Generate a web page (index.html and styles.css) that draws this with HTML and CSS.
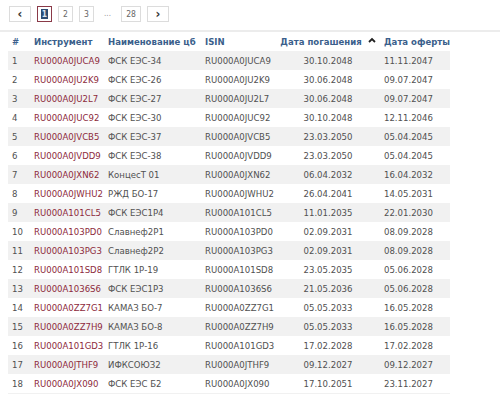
FILE: index.html
```html
<!DOCTYPE html>
<html lang="ru">
<head>
    <meta charset="UTF-8">
    <title>Облигации</title>
    <link rel="stylesheet" href="styles.css">
</head>
<body>
    <div class="pager">
        <span class="page-btn arrow">&#8249;</span>
        <span class="page-btn active"><span class="sel">1</span></span>
        <span class="page-btn">2</span>
        <span class="page-btn">3</span>
        <span class="page-gap">...</span>
        <span class="page-btn wide">28</span>
        <span class="page-btn arrow">&#8250;</span>
    </div>

    <div class="table-wrap">
        <table class="bonds">
            <thead>
                <tr>
                    <th class="col-num">#</th>
                    <th class="col-code">Инструмент</th>
                    <th class="col-name">Наименование цб</th>
                    <th class="col-isin">ISIN</th>
                    <th class="col-date">Дата погашения
                        <svg class="sort-icon" viewBox="0 0 8 6"><polyline points="1,5 4,2 7,5"></polyline></svg>
                    </th>
                    <th class="col-offer">Дата оферты</th>
                </tr>
            </thead>
            <tbody>
                <tr><td>1</td><td class="code">RU000A0JUCA9</td><td>ФСК ЕЭС-34</td><td>RU000A0JUCA9</td><td class="date">30.10.2048</td><td>11.11.2047</td></tr>
                <tr><td>2</td><td class="code">RU000A0JU2K9</td><td>ФСК ЕЭС-26</td><td>RU000A0JU2K9</td><td class="date">30.06.2048</td><td>09.07.2047</td></tr>
                <tr><td>3</td><td class="code">RU000A0JU2L7</td><td>ФСК ЕЭС-27</td><td>RU000A0JU2L7</td><td class="date">30.06.2048</td><td>09.07.2047</td></tr>
                <tr><td>4</td><td class="code">RU000A0JUC92</td><td>ФСК ЕЭС-30</td><td>RU000A0JUC92</td><td class="date">30.10.2048</td><td>12.11.2046</td></tr>
                <tr><td>5</td><td class="code">RU000A0JVCB5</td><td>ФСК ЕЭС-37</td><td>RU000A0JVCB5</td><td class="date">23.03.2050</td><td>05.04.2045</td></tr>
                <tr><td>6</td><td class="code">RU000A0JVDD9</td><td>ФСК ЕЭС-38</td><td>RU000A0JVDD9</td><td class="date">23.03.2050</td><td>05.04.2045</td></tr>
                <tr><td>7</td><td class="code">RU000A0JXN62</td><td>КонцесТ 01</td><td>RU000A0JXN62</td><td class="date">06.04.2032</td><td>16.04.2032</td></tr>
                <tr><td>8</td><td class="code">RU000A0JWHU2</td><td>РЖД БО-17</td><td>RU000A0JWHU2</td><td class="date">26.04.2041</td><td>14.05.2031</td></tr>
                <tr><td>9</td><td class="code">RU000A101CL5</td><td>ФСК ЕЭС1Р4</td><td>RU000A101CL5</td><td class="date">11.01.2035</td><td>22.01.2030</td></tr>
                <tr><td>10</td><td class="code">RU000A103PD0</td><td>Славнеф2Р1</td><td>RU000A103PD0</td><td class="date">02.09.2031</td><td>08.09.2028</td></tr>
                <tr><td>11</td><td class="code">RU000A103PG3</td><td>Славнеф2Р2</td><td>RU000A103PG3</td><td class="date">02.09.2031</td><td>08.09.2028</td></tr>
                <tr><td>12</td><td class="code">RU000A101SD8</td><td>ГТЛК 1Р-19</td><td>RU000A101SD8</td><td class="date">23.05.2035</td><td>05.06.2028</td></tr>
                <tr><td>13</td><td class="code">RU000A1036S6</td><td>ФСК ЕЭС1Р3</td><td>RU000A1036S6</td><td class="date">21.05.2036</td><td>05.06.2028</td></tr>
                <tr><td>14</td><td class="code">RU000A0ZZ7G1</td><td>КАМАЗ БО-7</td><td>RU000A0ZZ7G1</td><td class="date">05.05.2033</td><td>16.05.2028</td></tr>
                <tr><td>15</td><td class="code">RU000A0ZZ7H9</td><td>КАМАЗ БО-8</td><td>RU000A0ZZ7H9</td><td class="date">05.05.2033</td><td>16.05.2028</td></tr>
                <tr><td>16</td><td class="code">RU000A101GD3</td><td>ГТЛК 1Р-16</td><td>RU000A101GD3</td><td class="date">17.02.2028</td><td>17.02.2028</td></tr>
                <tr><td>17</td><td class="code">RU000A0JTHF9</td><td>ИФКСОЮЗ2</td><td>RU000A0JTHF9</td><td class="date">09.12.2027</td><td>09.12.2027</td></tr>
                <tr><td>18</td><td class="code">RU000A0JX090</td><td>ФСК ЕЭС Б2</td><td>RU000A0JX090</td><td class="date">17.10.2051</td><td>23.11.2027</td></tr>
                <tr class="next-row"><td colspan="6"></td></tr>
            </tbody>
        </table>
    </div>
</body>
</html>
```

FILE: styles.css
```css
* {
    margin: 0;
    padding: 0;
    box-sizing: border-box;
}

body {
    font-family: "DejaVu Sans Condensed", "DejaVu Sans", sans-serif;
    font-stretch: condensed;
    font-size: 9.5px;
    color: #505050;
    background: #fff;
    overflow: hidden;
}

/* pagination */
.pager {
    display: flex;
    align-items: center;
    gap: 6px;
    height: 30px;
    padding: 0 0 3px 9px;
}

.page-btn {
    display: flex;
    align-items: center;
    justify-content: center;
    width: 15px;
    height: 16px;
    border: 1px solid #dcdcdc;
    color: #666;
    font-size: 8.5px;
}

.page-btn.arrow {
    width: 22px;
    font-size: 13px;
    font-weight: bold;
    color: #333;
    line-height: 1;
}

.page-btn.wide {
    width: 20px;
}

.page-btn.active {
    border-color: #8a3a48;
}

.page-btn .sel {
    background: #2e4d72;
    color: #dde6f0;
    padding: 0 1px;
    line-height: 10px;
    font-weight: bold;
}

.page-gap {
    width: 15px;
    text-align: center;
    color: #999;
    font-size: 8px;
}

/* table */
.table-wrap {
    border-top: 2px solid #ececec;
    padding-left: 8px;
}

.bonds {
    width: 442px;
    border-collapse: collapse;
    table-layout: fixed;
}

.bonds th {
    height: 19px;
    text-align: left;
    color: #3b5f8c;
    font-weight: bold;
    white-space: nowrap;
    padding: 0 0 0 4px;
}

.bonds td {
    height: 19px;
    padding: 0 0 0 4px;
    white-space: nowrap;
}

.bonds tbody tr:nth-child(odd) {
    background: #f1f1f1;
}

.col-num { width: 22px; }
.col-code { width: 74px; }
.col-name { width: 97px; }
.col-isin { width: 75px; }
.col-date { width: 104px; }
.col-offer { width: 70px; }

.bonds th.col-date {
    text-align: center;
    padding-left: 0;
}

.bonds td.date {
    text-align: center;
    padding-left: 0;
}

.bonds td.code {
    color: #8d2a3b;
}

.sort-icon {
    width: 8px;
    height: 6px;
    margin-left: 3px;
    vertical-align: 2px;
    fill: none;
    stroke: #222;
    stroke-width: 1.8;
}
```
